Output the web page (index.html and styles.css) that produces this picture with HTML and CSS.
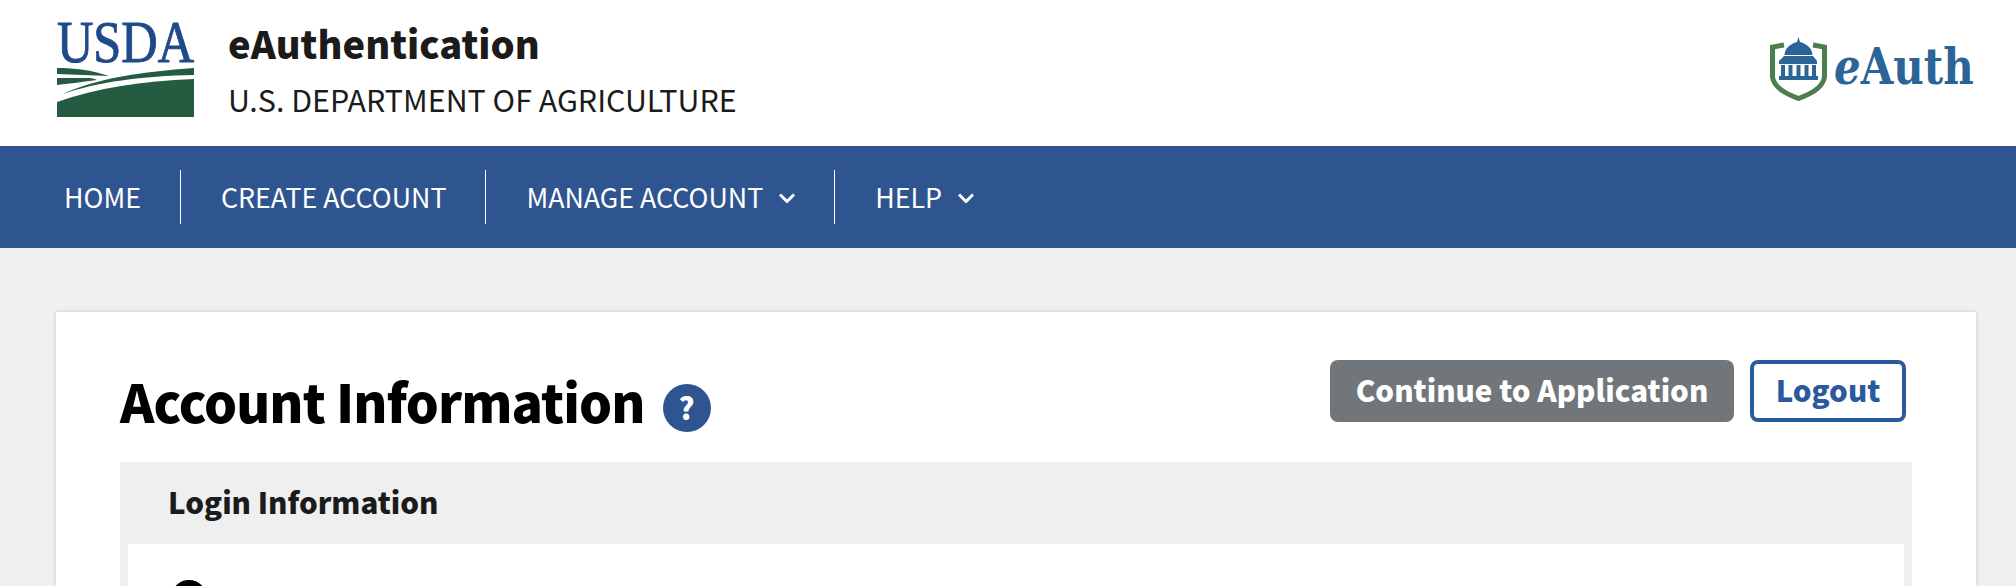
FILE: index.html
```html
<!DOCTYPE html>
<html lang="en">
<head>
<meta charset="utf-8">
<title>Account Information</title>
<link rel="stylesheet" href="styles.css">
</head>
<body>
<header class="masthead">
  <div class="brand">
    <svg class="usda" viewBox="0 0 137 96" width="137" height="96" aria-label="USDA">
      <text x="0" y="40" class="usda-word" textLength="137" lengthAdjust="spacingAndGlyphs">USDA</text>
      <path class="usda-green" d="M0 46 C18 46 34 48 52 54 L0 52 Z"/>
      <path class="usda-green" d="M0 56 L30 56 C36 56 38 57 40 58 C24 60 10 62 0 63 Z"/>
      <path class="usda-green" d="M6 72 C40 56 85 50 137 46 L137 53 C85 54 40 60 6 72 Z"/>
      <path class="usda-green" d="M0 80 C40 66 85 59 137 57 L137 95 L0 95 Z"/>
    </svg>
    <div class="brand-text">
      <div class="brand-title">eAuthentication</div>
      <div class="brand-sub">U.S. DEPARTMENT OF AGRICULTURE</div>
    </div>
  </div>
  <div class="eauth">
    <svg class="shield" viewBox="0 0 57 64" width="57" height="64" aria-hidden="true">
      <path class="shield-line" d="M14 8 L2.5 10 L2.5 40 C4 51 17 57 28.5 61.5 C40 57 53 51 54.5 40 L54.5 10 L43 8" />
      <path class="dome" d="M28.5 0 L30 5 C37 7 42 11 42.5 18 L14.5 18 C15 11 20 7 27 5 Z"/>
      <path class="dome" d="M14 19 H43 L47 24 V27 H9 V24 Z M9 39 H48 V43 H9 Z"/>
      <path class="dome" d="M11 28 H15 V39 H11 Z M18.500 28 H22.500 V39 H18.500 Z M26.500 28 H30.500 V39 H26.500 Z M34.500 28 H38.500 V39 H34.500 Z M42 28 H46 V39 H42 Z"/>
    </svg>
    <div class="eauth-box"><span class="eauth-word"><i class="eauth-e">e</i>Auth</span></div>
  </div>
</header>
<nav class="nav">
  <a class="nav-item nav-first">HOME</a>
  <a class="nav-item">CREATE ACCOUNT</a>
  <a class="nav-item">MANAGE ACCOUNT
    <svg class="chev" viewBox="0 0 16 10" width="16" height="10" aria-hidden="true"><path d="M1 1.500 L8 8.500 L15 1.500"/></svg>
  </a>
  <a class="nav-item">HELP
    <svg class="chev" viewBox="0 0 16 10" width="16" height="10" aria-hidden="true"><path d="M1 1.500 L8 8.500 L15 1.500"/></svg>
  </a>
</nav>
<main class="main">
  <section class="card">
    <div class="top">
      <div class="heading">
        <h1>Account Information</h1>
        <span class="help">?</span>
      </div>
      <div class="actions">
        <a class="btn btn-grey">Continue to Application</a>
        <a class="btn btn-outline">Logout</a>
      </div>
    </div>
    <div class="panel">
      <h2>Login Information</h2>
      <div class="panel-body">
        <span class="row-icon"></span>
      </div>
    </div>
  </section>
</main>
</body>
</html>
```
FILE: styles.css
```css
* { box-sizing: border-box; }
html, body { margin: 0; height: 586px; overflow: hidden; }
body {
  background: #f0f0f0;
  font-family: "Noto Sans CJK SC", "Noto Sans", sans-serif;
  color: #1b1b1b;
}
.masthead {
  height: 146px;
  background: #fff;
  display: flex;
  justify-content: space-between;
  padding: 22px 42px 0 57px;
}
.brand { display: flex; gap: 34px; align-items: flex-start; }
.usda { display: block; overflow: visible; }
.usda-word { font-family: "Liberation Serif", serif; font-size: 60px; fill: #1f4a8a; stroke: #1f4a8a; stroke-width: 1px; }
.usda-green { fill: #245b41; }
.brand-text { display: flex; flex-direction: column; }
.brand-title { font-size: 38px; font-weight: 900; line-height: 40px; margin-top: 1px; }
.brand-sub { font-size: 30.4px; line-height: 40px; margin-top: 16px; }
.eauth { display: flex; align-items: flex-start; gap: 7px; padding-top: 15px; }
.shield { display: block; }
.shield-line { fill: none; stroke: #4c7d4c; stroke-width: 5; }
.dome { fill: #2b6497; }
.eauth-box { width: 140px; height: 60px; }
.eauth-word {
  display: inline-block;
  font-family: "DejaVu Serif", serif;
  font-weight: 700;
  font-size: 50px;
  line-height: 60px;
  color: #2b6497;
  white-space: nowrap;
  transform: scaleX(.84);
  transform-origin: left center;
}
.eauth-e { font-style: italic; }
.nav {
  height: 102px;
  background: #2f5590;
  display: flex;
  align-items: center;
  padding-left: 24px;
}
.nav-item {
  color: #fff;
  font-size: 26.8px;
  height: 54px;
  line-height: 54px;
  padding: 0 39px 0 40px;
  border-left: 1px solid #fff;
  white-space: nowrap;
  display: flex;
  align-items: center;
  gap: 16px;
}
.nav-first { border-left: 0; }
.chev { fill: none; stroke: #fff; stroke-width: 3; margin-top: 2px; }
.main { padding: 64px 40px 0 56px; }
.card {
  background: #fff;
  height: 274px;
  padding: 48px 64px 0;
  box-shadow: 0 0 4px rgba(0,0,0,.18);
}
.top { display: flex; justify-content: space-between; height: 102px; padding-right: 6px; }
.heading { display: flex; align-items: flex-start; gap: 18px; }
h1 { margin: 0; font-size: 52px; line-height: 82px; font-weight: 900; color: #000; letter-spacing: -.9px; }
.help {
  width: 48px;
  height: 48px;
  border-radius: 50%;
  background: #2f5590;
  color: #fff;
  font-weight: 900;
  font-size: 30px;
  line-height: 46px;
  text-align: center;
  margin-top: 24px;
}
.actions { display: flex; gap: 16px; align-items: flex-start; }
.btn {
  height: 62px;
  border-radius: 8px;
  font-size: 29.5px;
  font-weight: 900;
  line-height: 58px;
  display: block;
  white-space: nowrap;
}
.btn-grey { background: #71767a; color: #fff; width: 404px; text-align: center; }
.btn-outline { width: 156px; border: 4px solid #2a5a9c; color: #2a5a9c; text-align: center; line-height: 50px; }
.panel { background: #efefef; padding: 0 8px; height: 124px; }
h2 { margin: 0 -8px; padding-left: 48px; height: 82px; font-size: 29.5px; line-height: 78px; font-weight: 900; color: #1b1b1b; }
.panel-body { background: #fff; height: 42px; padding: 36px 0 0 43px; overflow: hidden; }
.row-icon { display: block; width: 36px; height: 36px; border: 6px solid #000; border-radius: 50%; }
```
